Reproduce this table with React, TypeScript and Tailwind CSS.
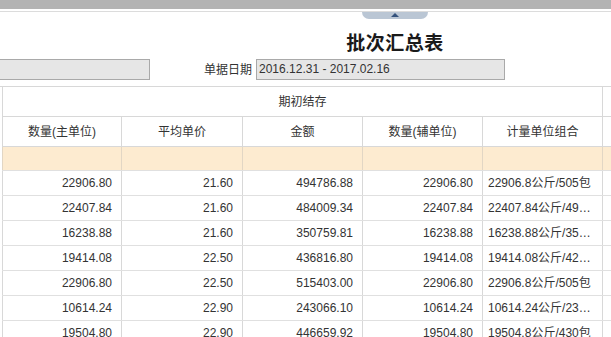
const rows = [
  ["22906.80", "21.60", "494786.88", "22906.80", "22906.8公斤/505包"],
  ["22407.84", "21.60", "484009.34", "22407.84", "22407.84公斤/49…"],
  ["16238.88", "21.60", "350759.81", "16238.88", "16238.88公斤/35…"],
  ["19414.08", "22.50", "436816.80", "19414.08", "19414.08公斤/42…"],
  ["22906.80", "22.50", "515403.00", "22906.80", "22906.8公斤/505包"],
  ["10614.24", "22.90", "243066.10", "10614.24", "10614.24公斤/23…"],
  ["19504.80", "22.90", "446659.92", "19504.80", "19504.8公斤/430包"],
];

const widths = ["w-[119px]", "w-[121px]", "w-[120px]", "w-[120px]", "w-[120px]"];
const headers = ["数量(主单位)", "平均单价", "金额", "数量(辅单位)", "计量单位组合"];

export default function App() {
  return (
    <div
      className="relative w-[611px] h-[337px] overflow-hidden bg-white text-[#333] text-[12px]"
      style={{ fontFamily: '"Liberation Sans", "Noto Sans CJK SC", sans-serif' }}
    >
      {/* top bar */}
      <div className="h-[9px] bg-[#b3b3b3]" />
      <div className="h-[2px] bg-white" />
      <div className="h-px bg-[#dcdcdc]" />

      {/* collapse handle */}
      <div className="absolute left-[362px] top-[12px] w-[66px] h-[7px] bg-[#bac6d4] rounded-b-[7px] flex justify-center items-start pt-[1px]">
        <div className="w-0 h-0 border-l-[4px] border-r-[4px] border-b-[4px] border-l-transparent border-r-transparent border-b-[#34527c]" />
      </div>

      <div className="w-[790px]">
        {/* title */}
        <div className="h-[47px] flex items-end justify-center pb-[8px]">
          <h1
            className="text-[19px] font-bold text-[#1a1a1a] leading-none tracking-[0.5px]"
            style={{ fontFamily: '"Noto Sans CJK SC", serif' }}
          >
            批次汇总表
          </h1>
        </div>

        {/* filters */}
        <div className="flex items-center h-[21px]">
          <div className="w-[151px] h-[21px] -ml-px bg-[#e6e6e6] border border-[#a9a9a9]" />
          <div className="w-[106px] text-right pr-[4px]">单据日期</div>
          <div className="w-[249px] h-[21px] bg-[#e6e6e6] border border-[#a9a9a9] pl-[2px] leading-[19px]">
            2016.12.31 - 2017.02.16
          </div>
        </div>

        {/* table */}
        <div className="mt-[6px] border-t border-[#d8d8d8] pl-[2px]">
          <div className="flex h-[30px] border-b border-[#d8d8d8]">
            <div className="w-[600px] border-l border-[#d8d8d8] flex items-center justify-center">期初结存</div>
            <div className="flex-1 border-l border-[#d8d8d8]" />
          </div>
          <div className="flex h-[30px] border-b border-[#d8d8d8]">
            {headers.map((h, i) => (
              <div key={h} className={`${widths[i]} border-l border-[#d8d8d8] flex items-center justify-center`}>
                {h}
              </div>
            ))}
            <div className="flex-1 border-l border-[#d8d8d8]" />
          </div>
          <div className="flex h-[24px] border-b border-[#e0e0e0] bg-[#fdebd0]">
            {widths.map((w, i) => (
              <div key={i} className={`${w} border-l border-[#e2d6c4]`} />
            ))}
            <div className="flex-1 border-l border-[#e2d6c4]" />
          </div>
          {rows.map((r, ri) => (
            <div key={ri} className="flex h-[25px] border-b border-[#e0e0e0]">
              {r.map((c, i) => (
                <div
                  key={i}
                  className={
                    i === 4
                      ? `${widths[i]} border-l border-[#d8d8d8] flex items-center pl-[5px] whitespace-nowrap`
                      : `${widths[i]} border-l border-[#d8d8d8] flex items-center justify-end pr-[9px]`
                  }
                >
                  {c}
                </div>
              ))}
              <div className="flex-1 border-l border-[#d8d8d8]" />
            </div>
          ))}
        </div>
      </div>
    </div>
  );
}
